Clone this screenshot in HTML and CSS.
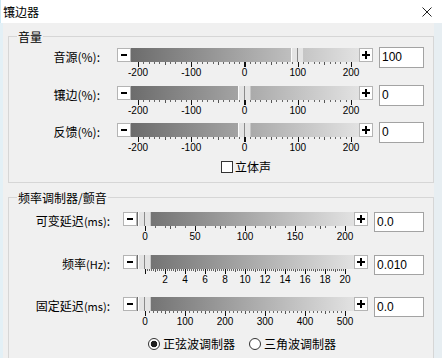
FILE: index.html
```html
<!DOCTYPE html>
<html lang="zh-CN">
<head>
<meta charset="utf-8">
<title>镶边器</title>
<link rel="stylesheet" href="styles.css">
</head>
<body>
<div class="window">
  <div class="titlebar">
    <span class="title">镶边器</span>
    <svg class="close" width="10" height="10" viewBox="0 0 10 10"><path d="M0.5 0.5L9.5 9.5M9.5 0.5L0.5 9.5" stroke="#222" stroke-width="1" fill="none"/></svg>
  </div>
  <div class="panel">
    <fieldset class="group g1">
      <legend>音量</legend>
      <div class="rows">
        <div class="row">
          <span class="lbl">音源(%):</span>
          <div class="sl">
            <div class="bar"><span class="btn minus"></span><div class="track"><span class="thumb" style="left:160px"></span></div><span class="btn plus"></span></div>
            <div class="scale s-pct"><div class="ticks"></div><div class="nums"><span>-200</span><span>-100</span><span>0</span><span>100</span><span>200</span></div></div>
          </div>
          <span class="val">100</span>
        </div>
        <div class="row">
          <span class="lbl">镶边(%):</span>
          <div class="sl">
            <div class="bar"><span class="btn minus"></span><div class="track"><span class="thumb" style="left:107px"></span></div><span class="btn plus"></span></div>
            <div class="scale s-pct"><div class="ticks"></div><div class="nums"><span>-200</span><span>-100</span><span>0</span><span>100</span><span>200</span></div></div>
          </div>
          <span class="val">0</span>
        </div>
        <div class="row">
          <span class="lbl">反馈(%):</span>
          <div class="sl">
            <div class="bar"><span class="btn minus"></span><div class="track"><span class="thumb" style="left:107px"></span></div><span class="btn plus"></span></div>
            <div class="scale s-pct"><div class="ticks"></div><div class="nums"><span>-200</span><span>-100</span><span>0</span><span>100</span><span>200</span></div></div>
          </div>
          <span class="val">0</span>
        </div>
      </div>
      <label class="check"><span class="box"></span><span>立体声</span></label>
    </fieldset>

    <fieldset class="group g2">
      <legend>频率调制器/颤音</legend>
      <div class="rows">
        <div class="row">
          <span class="lbl">可变延迟<span class="unit">(ms)</span>:</span>
          <div class="sl">
            <div class="bar"><span class="btn minus"></span><div class="track"><span class="thumb" style="left:1px"></span></div><span class="btn plus"></span></div>
            <div class="scale s-var"><div class="ticks"></div><div class="nums"><span>0</span><span>50</span><span>100</span><span>150</span><span>200</span></div></div>
          </div>
          <span class="val">0.0</span>
        </div>
        <div class="row">
          <span class="lbl">频率<span class="unit">(Hz)</span>:</span>
          <div class="sl">
            <div class="bar"><span class="btn minus"></span><div class="track"><span class="thumb" style="left:1px"></span></div><span class="btn plus"></span></div>
            <div class="scale s-freq"><div class="ticks"></div><div class="nums"><span>2</span><span>4</span><span>6</span><span>8</span><span>10</span><span>12</span><span>14</span><span>16</span><span>18</span><span>20</span></div></div>
          </div>
          <span class="val">0.010</span>
        </div>
        <div class="row">
          <span class="lbl">固定延迟<span class="unit">(ms)</span>:</span>
          <div class="sl">
            <div class="bar"><span class="btn minus"></span><div class="track"><span class="thumb" style="left:1px"></span></div><span class="btn plus"></span></div>
            <div class="scale s-fix"><div class="ticks"></div><div class="nums"><span>0</span><span>100</span><span>200</span><span>300</span><span>400</span><span>500</span></div></div>
          </div>
          <span class="val">0.0</span>
        </div>
      </div>
      <div class="radios">
        <label class="radio"><span class="dot on"></span><span>正弦波调制器</span></label>
        <label class="radio"><span class="dot"></span><span>三角波调制器</span></label>
      </div>
    </fieldset>
  </div>
</div>
</body>
</html>
```

FILE: styles.css
```css
* { box-sizing: border-box; }
html, body { margin: 0; padding: 0; }
body {
  width: 442px;
  height: 358px;
  overflow: hidden;
  background: #f0f0f0;
  color: #000;
  font-family: "Noto Sans CJK SC", "Noto Sans", sans-serif;
  font-size: 12px;
}
.window {
  width: 442px;
  height: 358px;
  display: flex;
  flex-direction: column;
  overflow: hidden;
}
.titlebar {
  flex: none;
  height: 23px;
  background: #fff;
  display: flex;
  align-items: center;
  justify-content: space-between;
  padding: 0 10px 0 2px;
  border-left: 1px solid #cfe9f4;
}
.title { font-size: 12px; line-height: 14px; }
.close { display: block; }

.panel {
  flex: 1;
  background: #f0f0f0;
  border-left: 3px solid #e3f0f6;
  border-right: 8px solid #e7eef2;
}

.group {
  margin: 6px 0 0 5px;
  padding: 4px 0 9px 0;
  border: 1px solid #d6d6d6;
  min-width: 0;
}
.g1 { --inset: 7px; }
.g2 { --inset: 8px; margin-top: 7px; padding-top: 7px; padding-bottom: 40px; }
.group legend {
  margin-left: 8px;
  padding: 0 1px;
  font-size: 12px;
  line-height: 15px;
}

.rows { display: flex; flex-direction: column; gap: 7.5px; }
.g2 .rows { gap: 12.5px; }
.row { display: flex; align-items: flex-start; }

.lbl {
  flex: none;
  width: 91px;
  margin-right: 17px;
  text-align: right;
  white-space: nowrap;
  font-size: 12px;
  line-height: 14px;
  padding-top: 2px;
}
.g2 .lbl { width: 101px; margin-right: 13px; }
.unit { font-size: 11px; }

.sl { flex: none; width: 256px; }
.g2 .sl { width: 245px; }

.bar { display: flex; height: 14px; }
.btn {
  flex: none;
  width: 14px;
  height: 14px;
  background-color: #fff;
  border: 1px solid #b4b4b4;
  background-repeat: no-repeat;
  background-position: center;
}
.minus {
  background-image: linear-gradient(#000, #000);
  background-size: 6px 2px;
}
.plus {
  background-image: linear-gradient(#000, #000), linear-gradient(#000, #000);
  background-size: 8px 2px, 2px 8px;
}
.track {
  flex: 1;
  position: relative;
  background: linear-gradient(to right, #6c6c6c, #e2e2e2);
}
.thumb {
  position: absolute;
  top: 0;
  bottom: 0;
  width: 13px;
  background: linear-gradient(to right, #fbfbfb 0 1px, #e4e4e4 1px 6px, #8a8a8a 6px 7px, #e4e4e4 7px 12px, #c6c6c6 12px);
}

.scale { margin-left: calc(14px + var(--inset)); }
.ticks {
  width: var(--tw);
  height: 5px;
  background:
    repeating-linear-gradient(to right, #111 0 1px, transparent 1px var(--step)) 0 0 / 100% 5px no-repeat,
    repeating-linear-gradient(to right, #555 0 1px, transparent 1px calc(var(--step) / 2)) 0 0 / 100% 3px no-repeat,
    repeating-linear-gradient(to right, #666 0 1px, transparent 1px var(--minor)) 0 0 / 100% 2px no-repeat;
}
.nums {
  display: grid;
  grid-auto-flow: column;
  grid-auto-columns: var(--step);
  margin-left: calc(var(--first) - var(--step) / 2);
  margin-top: 1px;
  font-family: "Liberation Sans", Arial, sans-serif;
  font-size: 10px;
  line-height: 10px;
  text-align: center;
  white-space: nowrap;
}
.s-pct { --step: 53.25px; --minor: 5.325px; --tw: 214px; --first: 0px; }
.s-var { --step: 50px; --minor: 10px; --tw: 201px; --first: 0px; }
.s-freq { --step: 20px; --minor: 2px; --tw: 201px; --first: 20px; }
.s-fix { --step: 40px; --minor: 4px; --tw: 201px; --first: 0px; }

.val {
  flex: none;
  margin-left: 6px;
  margin-top: -1px;
  width: 45px;
  height: 21px;
  background: #fff;
  border: 1px solid #a3a3a3;
  padding-left: 2px;
  font-family: "Liberation Sans", Arial, sans-serif;
  font-size: 12px;
  line-height: 19px;
}
.g2 .val { width: 50px; height: 20px; margin-top: 0; line-height: 18px; }

.check {
  display: flex;
  align-items: center;
  gap: 2px;
  height: 12px;
  margin: 8px 0 0 212px;
  line-height: 12px;
  font-size: 12px;
}
.box {
  width: 12px;
  height: 12px;
  border: 1px solid #333;
  background: #fff;
}

.radios {
  display: flex;
  align-items: center;
  height: 12px;
  margin: 11px 0 0 139px;
  line-height: 12px;
}
.radio { display: flex; align-items: center; gap: 3px; }
.radio + .radio { margin-left: 14px; }
.dot {
  width: 12px;
  height: 12px;
  border: 1px solid #333;
  border-radius: 50%;
  background: #fff;
}
.dot.on { background: radial-gradient(circle, #1e1e1e 0 3px, #fff 3.6px); }
```
